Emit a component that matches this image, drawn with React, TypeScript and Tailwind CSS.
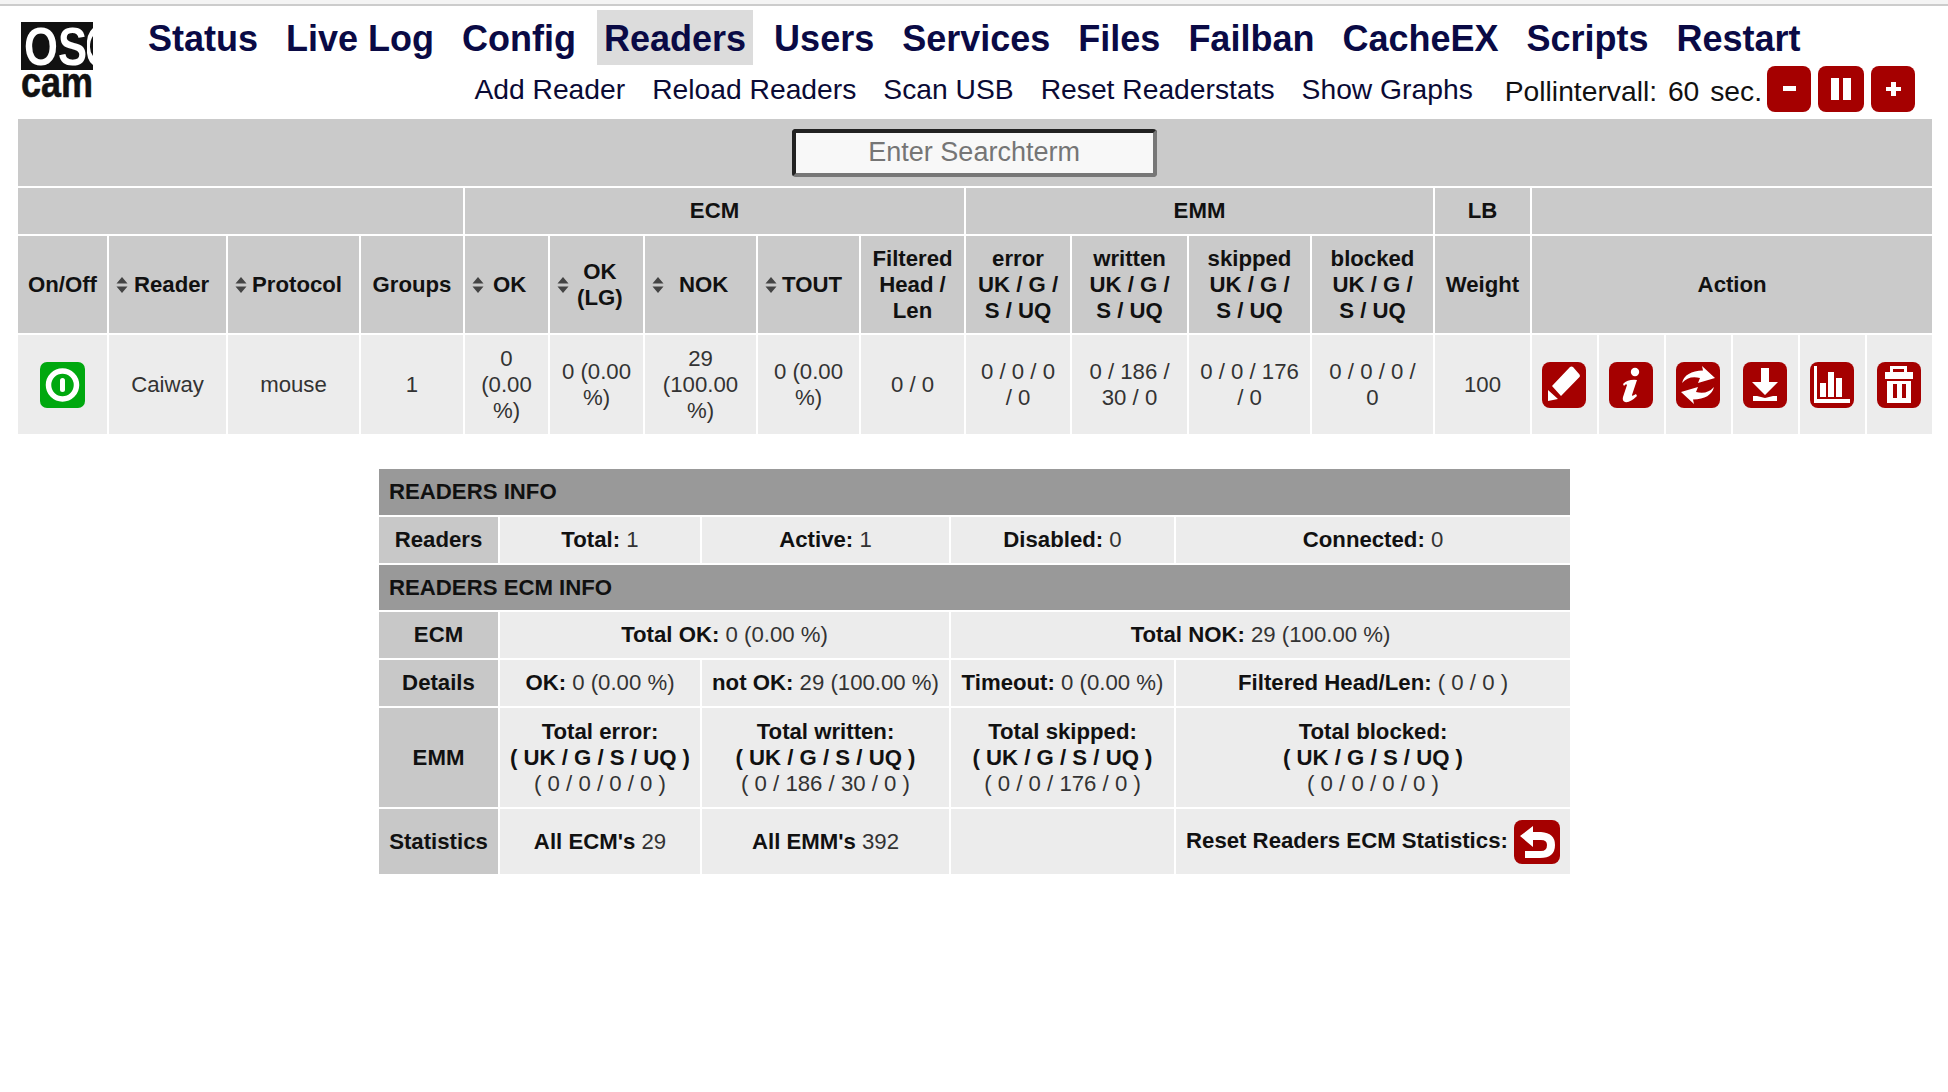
const Sort = () => (
  <svg viewBox="0 0 12 18" className="block w-[12px] h-[18px] shrink-0">
    <path d="M6 1 L11.5 7.5 H0.5Z M6 17 L11.5 10.5 H0.5Z" fill="#444" />
  </svg>
);

const IconBox = ({ children, color = "#a50000", w = 44, h = 46 }: { children: React.ReactNode; color?: string; w?: number; h?: number }) => (
  <svg viewBox={`0 0 ${w} ${h}`} width={w} height={h} className="inline-block align-middle">
    <rect width={w} height={h} rx="8" fill={color} />
    {children}
  </svg>
);

const Pencil = () => (
  <IconBox>
    <path d="M28 5 Q29.5 4 31 5 L37.5 12.5 Q38.5 14 37.5 15 L19 34 L10 24Z M6 28 L16 37 L6 39Z" fill="#fff" />
  </IconBox>
);
const Info = () => (
  <IconBox>
    <circle cx="26" cy="10" r="4.2" fill="#fff" />
    <path d="M14 22 Q19 17 28 18 L23 33 Q22.5 35 27 32 L28 34 Q21 41 16 40 Q13 39 14 35 L18 23 Q17 21 15 24Z" fill="#fff" />
  </IconBox>
);
const Refresh = () => {
  const d = "M26 4 L39 16 L22 21 L24 16 Q13 13 6 21 Q9 9 27 8.5Z";
  return (
    <IconBox>
      <path d={d} fill="#fff" />
      <path d={d} fill="#fff" transform="rotate(180 22 23)" />
    </IconBox>
  );
};
const Download = () => (
  <IconBox>
    <path d="M18 6 H26 V20 H35 L22 33 L9 20 H18Z M10 34 L14 34 L22 36 L30 34 H34 V39 H10Z" fill="#fff" />
  </IconBox>
);
const Chart = () => (
  <IconBox>
    <path d="M4 4 H7 V37 H40 V41 H4Z M10 21 H16 V35 H10Z M18 10 H24 V35 H18Z M26 16 H32 V35 H26Z" fill="#fff" />
  </IconBox>
);
const Trash = () => (
  <IconBox>
    <path fillRule="evenodd" d="M13 10 V4 H30 V10 H27 V7 H16 V10Z M8 10 H36 V17 H8Z M10 19 H34 V41 H10Z M16 22 V36 H20 V22Z M25 22 V36 H29 V22Z" fill="#fff" />
  </IconBox>
);
const Back = () => (
  <IconBox w={46} h={44}>
    <path d="M6 16 L19 6 V12 H27 Q41 13 41 25 Q41 38 26 38 H11 V31 H27 Q33 31 33 25 Q33 20 27 20 H19 V27Z" fill="#fff" />
  </IconBox>
);
const Power = () => (
  <svg viewBox="0 0 45 46" width={45} height={46} className="inline-block align-middle">
    <rect width="45" height="46" rx="7" fill="#00a80f" />
    <circle cx="22.5" cy="23" r="14" fill="none" stroke="#fff" strokeWidth="5.5" />
    <rect x="20" y="16" width="5" height="14" rx="2.5" fill="#fff" />
  </svg>
);

const Logo = () => (
  <svg viewBox="0 0 72 76" width={72} height={76} className="block overflow-visible">
    <rect width="72" height="48" fill="#111" />
    <g fontFamily="'Liberation Sans', sans-serif" fontWeight="700">
      <text x="3" y="43" fontSize="54" fill="#fff" textLength="63" lengthAdjust="spacingAndGlyphs">OS</text>
      <path d="M72 6 Q65 12 66 25 Q65 38 72 43 L72 34 Q69 30 69 25 Q69 18 72 14Z" fill="#fff" />
      <text x="0" y="75" fontSize="42" fill="#111" stroke="#111" strokeWidth="0.6" textLength="72" lengthAdjust="spacingAndGlyphs">cam</text>
    </g>
  </svg>
);

const nav = ["Status", "Live Log", "Config", "Readers", "Users", "Services", "Files", "Failban", "CacheEX", "Scripts", "Restart"];
const sub = ["Add Reader", "Reload Readers", "Scan USB", "Reset Readerstats", "Show Graphs"];

const widths = ["w-[89px]", "w-[117px]", "w-[131px]", "w-[102px]", "w-[83px]", "w-[93px]", "w-[111px]", "w-[101px]", "w-[103px]", "w-[104px]", "w-[115px]", "w-[121px]", "w-[121px]", "w-[95px]", "w-[65px]", "w-[65px]", "w-[65px]", "w-[65px]", "w-[65px]", "w-[65px]"];

const H = "bg-[#cacaca] font-bold text-[#111] text-center px-[2px]";
const HS = "bg-[#cacaca] font-bold text-[#111] pl-[7px] pr-0";
const D = "bg-[#ececec] text-[#333] text-center px-[10px]";
const A = "bg-[#ececec] text-center pr-[2px]";

const I = "bg-[#ececec] text-[#333] text-center px-[2px]";
const L = "bg-[#c8c8c8] font-bold text-[#111] text-center px-[2px]";
const T = "bg-[#999999] font-bold text-[#111] text-left pl-[10px]";
const B = ({ children }: { children: React.ReactNode }) => <b className="font-bold text-[#111]">{children}</b>;

export default function App() {
  return (
    <div className="font-['Liberation_Sans',Arial,sans-serif] text-[22.2px] leading-[26px] bg-white min-h-[1092px] text-[#333]">
      <div className="h-[6px] bg-[#f4f4f4] border-b-2 border-[#cccccc]" />
      <header className="flex h-[111px] pl-[21px] pr-[33px]">
        <div className="pt-[16px] w-[120px] shrink-0">
          <Logo />
        </div>
        <div className="flex-1 flex flex-col">
          <nav className="flex gap-[14px] pt-[4px] pl-0 h-[59px]">
            {nav.map((n) => (
              <a key={n} className={`px-[7px] pt-[2px] h-[55px] flex items-center text-[36px] font-bold text-[#0a0a45] ${n === "Readers" ? "bg-[#dcdcdc]" : ""}`}>
                {n}
              </a>
            ))}
          </nav>
          <div className="flex items-center justify-end h-[48px] text-[28.25px] text-[#0a0a35]">
            {sub.map((s) => (
              <a key={s} className="mr-[27px]">{s}</a>
            ))}
            <span className="ml-[5px] mr-[5px] pt-[4px] text-[#111] [word-spacing:3px]">Pollintervall: 60 sec.</span>
            <div className="flex gap-[7px]">
              <svg viewBox="0 0 44 46" width={44} height={46}>
                <rect width="44" height="46" rx="8" fill="#a50000" />
                <rect x="16" y="20" width="13" height="5" fill="#fff" />
              </svg>
              <svg viewBox="0 0 46 46" width={46} height={46}>
                <rect width="46" height="46" rx="8" fill="#a50000" />
                <rect x="13" y="12" width="8" height="22" fill="#fff" />
                <rect x="25" y="12" width="8" height="22" fill="#fff" />
              </svg>
              <svg viewBox="0 0 44 46" width={44} height={46}>
                <rect width="44" height="46" rx="8" fill="#a50000" />
                <path d="M20 16H25V21H30V25H25V30H20V25H15V21H20Z" fill="#fff" />
              </svg>
            </div>
          </div>
        </div>
      </header>

      <div className="pl-[16px]">
        <table className="table-fixed border-separate border-spacing-[2px] w-[1917px]">
          <colgroup>
            {widths.map((w, i) => (
              <col key={i} className={w} />
            ))}
          </colgroup>
          <tbody>
            <tr className="h-[67px]">
              <td colSpan={20} className="bg-[#cacaca] text-center pr-[2px]">
                <input
                  placeholder="Enter Searchterm"
                  className="w-[365px] h-[48px] bg-[#f8f8f8] text-center text-[27px] text-[#333] placeholder:text-[#757575] border-[4px] border-t-[#222] border-l-[#222] border-r-[#777] border-b-[#777] rounded-[4px] align-middle"
                />
              </td>
            </tr>
            <tr className="h-[46px]">
              <th colSpan={4} className={H}></th>
              <th colSpan={5} className={H}>ECM</th>
              <th colSpan={4} className={H}>EMM</th>
              <th className={H}>LB</th>
              <th colSpan={6} className={H}></th>
            </tr>
            <tr className="h-[97px]">
              <th className={H}>On/Off</th>
              <th className={HS}><div className="flex items-center"><Sort /><span className="ml-[6px]">Reader</span></div></th>
              <th className={HS}><div className="flex items-center"><Sort /><span className="ml-[5px]">Protocol</span></div></th>
              <th className={H}>Groups</th>
              <th className={HS}><div className="flex items-center"><Sort /><span className="ml-[9px]">OK</span></div></th>
              <th className={HS}><div className="flex items-center"><Sort /><span className="ml-[8px] text-center">OK<br />(LG)</span></div></th>
              <th className={HS}><div className="flex items-center"><Sort /><span className="ml-[15px]">NOK</span></div></th>
              <th className={HS}><div className="flex items-center"><Sort /><span className="ml-[5px]">TOUT</span></div></th>
              <th className={H}>Filtered Head / Len</th>
              <th className={H}>error<br />UK / G /<br />S / UQ</th>
              <th className={H}>written<br />UK / G /<br />S / UQ</th>
              <th className={H}>skipped<br />UK / G /<br />S / UQ</th>
              <th className={H}>blocked<br />UK / G /<br />S / UQ</th>
              <th className={H}>Weight</th>
              <th colSpan={6} className={H}>Action</th>
            </tr>
            <tr className="h-[99px]">
              <td className="bg-[#ececec] text-center"><Power /></td>
              <td className={`${D} text-[#1a1a3a]`}>Caiway</td>
              <td className={D}>mouse</td>
              <td className={D}>1</td>
              <td className={D}>0 (0.00 %)</td>
              <td className={D}>0 (0.00 %)</td>
              <td className={D}>29 (100.00 %)</td>
              <td className={D}>0 (0.00 %)</td>
              <td className={D}>0 / 0</td>
              <td className={D}>0 / 0 / 0 / 0</td>
              <td className={D}>0 / 186 / 30 / 0</td>
              <td className={D}>0 / 0 / 176 / 0</td>
              <td className={D}>0 / 0 / 0 / 0</td>
              <td className={D}>100</td>
              <td className={A}><Pencil /></td>
              <td className={A}><Info /></td>
              <td className={A}><Refresh /></td>
              <td className={A}><Download /></td>
              <td className={A}><Chart /></td>
              <td className={A}><Trash /></td>
            </tr>
          </tbody>
        </table>

        <table className="table-fixed border-separate border-spacing-[2px] w-[1195px] ml-[361px] mt-[31px]">
          <colgroup>
            <col className="w-[119px]" />
            <col className="w-[200px]" />
            <col className="w-[247px]" />
            <col className="w-[223px]" />
            <col className="w-[394px]" />
          </colgroup>
          <tbody>
            <tr className="h-[46px]"><td colSpan={5} className={T}>READERS INFO</td></tr>
            <tr className="h-[46px]">
              <td className={L}>Readers</td>
              <td className={I}><B>Total:</B> 1</td>
              <td className={I}><B>Active:</B> 1</td>
              <td className={I}><B>Disabled:</B> 0</td>
              <td className={I}><B>Connected:</B> 0</td>
            </tr>
            <tr className="h-[45px]"><td colSpan={5} className={T}>READERS ECM INFO</td></tr>
            <tr className="h-[46px]">
              <td className={L}>ECM</td>
              <td colSpan={2} className={I}><B>Total OK:</B> 0 (0.00 %)</td>
              <td colSpan={2} className={I}><B>Total NOK:</B> 29 (100.00 %)</td>
            </tr>
            <tr className="h-[46px]">
              <td className={L}>Details</td>
              <td className={I}><B>OK:</B> 0 (0.00 %)</td>
              <td className={I}><B>not OK:</B> 29 (100.00 %)</td>
              <td className={I}><B>Timeout:</B> 0 (0.00 %)</td>
              <td className={I}><B>Filtered Head/Len:</B> ( 0 / 0 )</td>
            </tr>
            <tr className="h-[99px]">
              <td className={L}>EMM</td>
              <td className={I}><B>Total error:<br />( UK / G / S / UQ )</B><br />( 0 / 0 / 0 / 0 )</td>
              <td className={I}><B>Total written:<br />( UK / G / S / UQ )</B><br />( 0 / 186 / 30 / 0 )</td>
              <td className={I}><B>Total skipped:<br />( UK / G / S / UQ )</B><br />( 0 / 0 / 176 / 0 )</td>
              <td className={I}><B>Total blocked:<br />( UK / G / S / UQ )</B><br />( 0 / 0 / 0 / 0 )</td>
            </tr>
            <tr className="h-[65px]">
              <td className={L}>Statistics</td>
              <td className={I}><B>All ECM's</B> 29</td>
              <td className={I}><B>All EMM's</B> 392</td>
              <td className={I}></td>
              <td className={I}>
                <B>Reset Readers ECM Statistics:</B> <Back />
              </td>
            </tr>
          </tbody>
        </table>
      </div>
    </div>
  );
}
